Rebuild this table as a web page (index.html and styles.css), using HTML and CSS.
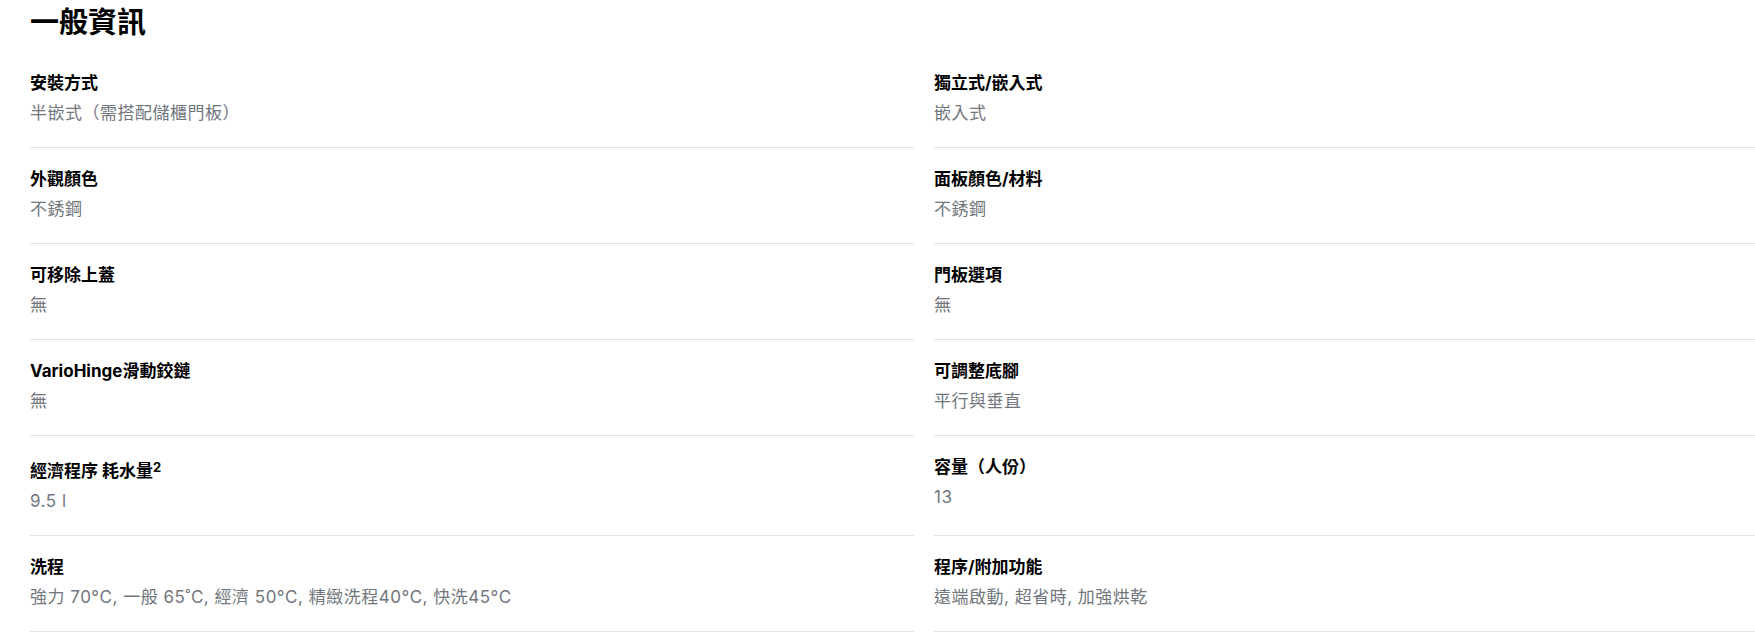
FILE: index.html
```html
<!DOCTYPE html>
<html lang="zh-Hant">
<head>
    <meta charset="UTF-8">
    <meta name="viewport" content="width=device-width, initial-scale=1.0">
    <title>一般資訊</title>
    <link rel="stylesheet" href="styles.css">
</head>
<body>
    <section class="specs">
        <h2 class="specs-title">一般資訊</h2>

        <div class="spec-grid">
            <div class="spec-item">
                <div class="spec-label">安裝方式</div>
                <div class="spec-value">半嵌式（需搭配儲櫃門板）</div>
            </div>
            <div class="spec-item">
                <div class="spec-label">獨立式/嵌入式</div>
                <div class="spec-value">嵌入式</div>
            </div>

            <div class="spec-item">
                <div class="spec-label">外觀顏色</div>
                <div class="spec-value">不銹鋼</div>
            </div>
            <div class="spec-item">
                <div class="spec-label">面板顏色/材料</div>
                <div class="spec-value">不銹鋼</div>
            </div>

            <div class="spec-item">
                <div class="spec-label">可移除上蓋</div>
                <div class="spec-value">無</div>
            </div>
            <div class="spec-item">
                <div class="spec-label">門板選項</div>
                <div class="spec-value">無</div>
            </div>

            <div class="spec-item">
                <div class="spec-label">VarioHinge滑動鉸鏈</div>
                <div class="spec-value">無</div>
            </div>
            <div class="spec-item">
                <div class="spec-label">可調整底腳</div>
                <div class="spec-value">平行與垂直</div>
            </div>

            <div class="spec-item">
                <div class="spec-label">經濟程序 耗水量<sup>2</sup></div>
                <div class="spec-value">9.5 l</div>
            </div>
            <div class="spec-item">
                <div class="spec-label">容量（人份）</div>
                <div class="spec-value">13</div>
            </div>

            <div class="spec-item">
                <div class="spec-label">洗程</div>
                <div class="spec-value">強力 70°C, 一般 65˚C, 經濟 50°C, 精緻洗程40°C, 快洗45°C</div>
            </div>
            <div class="spec-item">
                <div class="spec-label">程序/附加功能</div>
                <div class="spec-value">遠端啟動, 超省時, 加強烘乾</div>
            </div>
        </div>
    </section>
</body>
</html>
```

FILE: styles.css
```css
body {
    margin: 0;
    background-color: #fff;
    color: #000;
    font-family: Inter, "Noto Sans CJK TC", sans-serif;
    overflow: hidden;
}

.specs {
    padding-left: 30px;
}

.specs-title {
    margin: 5px 0 11px;
    font-size: 29px;
    line-height: 36px;
    font-weight: 700;
}

.spec-grid {
    display: grid;
    grid-template-columns: 884px 884px;
    column-gap: 20px;
}

.spec-item {
    padding: 19px 0 22px;
    border-bottom: 1px solid #e0e2e5;
}

.spec-label {
    font-size: 17px;
    line-height: 24px;
    font-weight: 700;
}

.spec-label sup {
    font-size: 13px;
    vertical-align: 5px;
}

.spec-value {
    margin-top: 6px;
    font-size: 17px;
    line-height: 24px;
    letter-spacing: 0.5px;
    color: #71767c;
}
```
